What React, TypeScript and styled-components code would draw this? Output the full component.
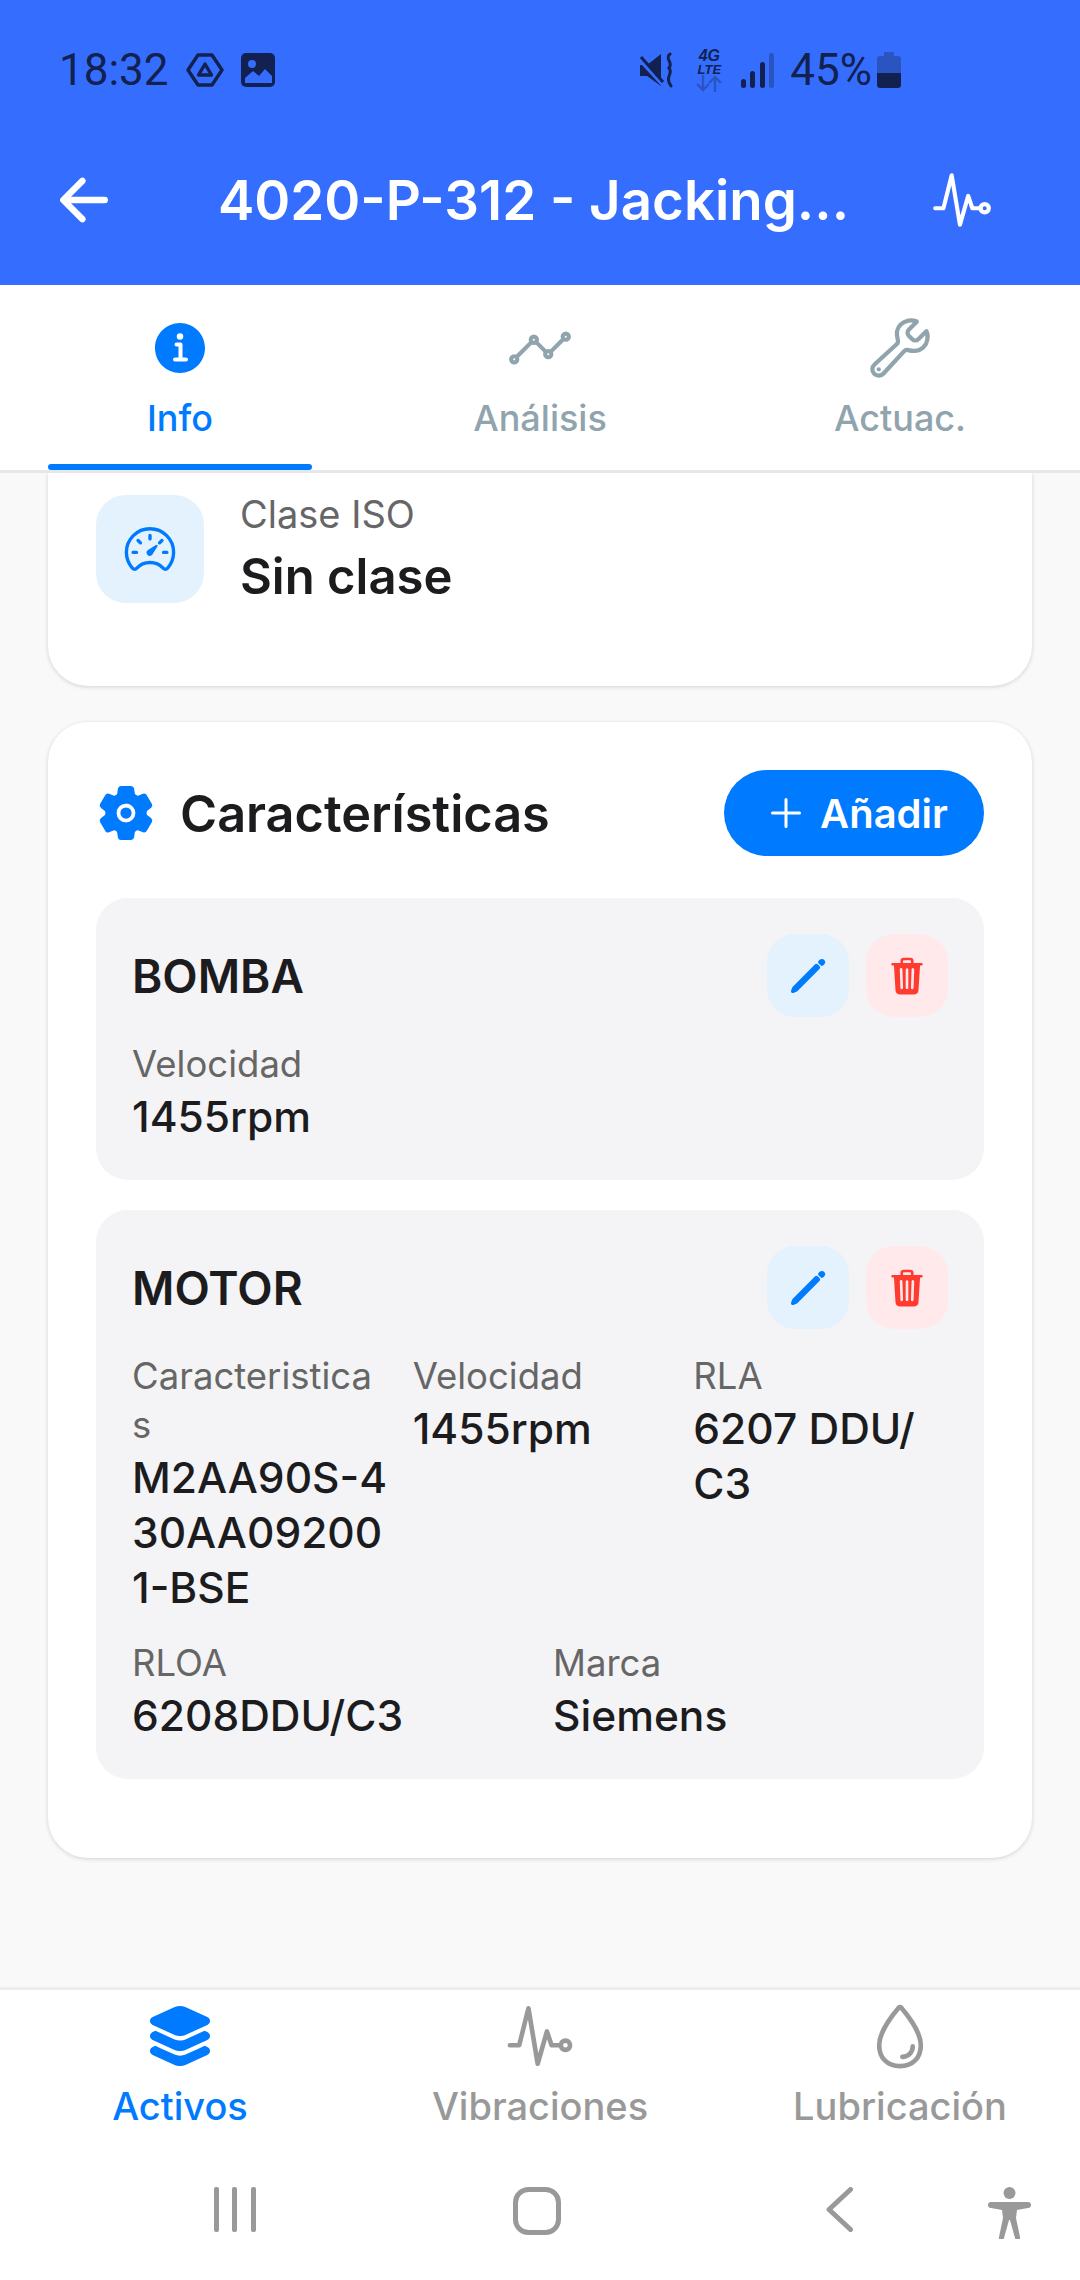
import React from "react";
import styled, { createGlobalStyle } from "styled-components";
import {
  IoAdd,
  IoAnalyticsOutline,
  IoArrowBack,
  IoBuildOutline,
  IoInformationCircle,
  IoLayers,
  IoPencil,
  IoPulseOutline,
  IoSettings,
  IoSpeedometerOutline,
  IoTrash,
  IoWaterOutline,
} from "react-icons/io5";

const ACCENT = "#007aff";
const STATUS_INK = "#12214f";
const STATUS_DIM = "#2a55c0";

const GlobalStyle = createGlobalStyle`
  html, body {
    margin: 0;
    padding: 0;
    background: #f9f9f9;
  }
  * {
    box-sizing: border-box;
  }
`;

const Screen = styled.div`
  width: 1080px;
  height: 2280px;
  display: flex;
  flex-direction: column;
  overflow: hidden;
  font-family: Inter, "Liberation Sans", sans-serif;
  color: #1c1c1e;
  background: #f9f9f9;
`;

const Header = styled.header`
  height: 285px;
  background: #356eff;
  display: flex;
  flex-direction: column;
  flex-shrink: 0;
`;

const StatusBar = styled.div`
  height: 140px;
  padding: 0 60px 0 59px;
  display: flex;
  align-items: center;
  justify-content: space-between;
  font-family: Roboto, sans-serif;
  font-size: 44px;
  color: ${STATUS_INK};
`;

const StatusGroup = styled.div<{ $gap: number }>`
  display: flex;
  align-items: center;
  gap: ${(p) => p.$gap}px;
`;

const StatusRight = styled(StatusGroup)`
  margin-right: 119px;
`;

const MuteSlot = styled.div`
  display: flex;
  margin-right: 4px;
`;

const Percent = styled.span`
  margin-left: -1px;
  margin-right: -12px;
`;

const NetBadge = styled.div`
  width: 30px;
  display: flex;
  flex-direction: column;
  align-items: center;
  font-family: "Liberation Sans", sans-serif;
  font-weight: 700;
  font-style: italic;
`;

const NetText = styled.span<{ $size: number }>`
  font-size: ${(p) => p.$size}px;
  line-height: ${(p) => p.$size}px;
  height: ${(p) => p.$size - 1}px;
`;

const AppBar = styled.div`
  height: 120px;
  padding: 0 85px 0 50px;
  display: flex;
  align-items: center;
  justify-content: space-between;
  color: #fff;
`;

const BarTitle = styled.h1`
  margin: 0;
  padding-left: 20px;
  flex: 1;
  text-align: center;
  font-size: 54.6px;
  font-weight: 600;
  white-space: nowrap;
`;

const TabBar = styled.nav`
  height: 188px;
  flex-shrink: 0;
  display: flex;
  background: #fff;
  border-bottom: 3px solid #e5e7ea;
`;

const Tab = styled.div<{ $active?: boolean }>`
  position: relative;
  flex: 1;
  display: flex;
  flex-direction: column;
  align-items: center;
  padding-top: 27px;
  color: ${(p) => (p.$active ? ACCENT : "#90a4ae")};
  ${(p) =>
    p.$active &&
    `&::after {
      content: "";
      position: absolute;
      left: 48px;
      right: 48px;
      bottom: 0;
      height: 6px;
      border-radius: 3px;
      background: ${ACCENT};
    }`}
`;

const TabIcon = styled.div`
  height: 72px;
  display: flex;
  align-items: center;
  justify-content: center;
`;

const TabLabel = styled.span`
  margin-top: 12px;
  font-size: 36px;
  line-height: 44px;
  font-weight: 500;
`;

const Content = styled.main`
  flex: 1;
  padding: 0 48px;
  display: flex;
  flex-direction: column;
  gap: 36px;
  overflow: hidden;
`;

const Card = styled.section`
  background: #fff;
  border-radius: 40px;
  box-shadow: 0 1px 4px rgba(0, 0, 0, 0.16);
`;

const IsoCard = styled(Card)`
  padding: 22px 48px 83px;
  border-top-left-radius: 0;
  border-top-right-radius: 0;
  display: flex;
  align-items: center;
  gap: 36px;
`;

const IconBox = styled.div`
  width: 108px;
  height: 108px;
  border-radius: 30px;
  background: #e3f2fd;
  color: ${ACCENT};
  display: flex;
  align-items: center;
  justify-content: center;
`;

const IsoLabel = styled.div`
  font-size: 38px;
  line-height: 38px;
  color: #666;
`;

const IsoValue = styled.div`
  margin-top: 18px;
  font-size: 49px;
  line-height: 52px;
  font-weight: 600;
`;

const FeatureCard = styled(Card)`
  padding: 48px 48px 79px;
`;

const FeatureHead = styled.div`
  display: flex;
  align-items: center;
  justify-content: space-between;
  margin-bottom: 42px;
`;

const FeatureTitle = styled.div`
  display: flex;
  align-items: center;
  gap: 24px;
  color: ${ACCENT};
`;

const TitleText = styled.h2`
  margin: 0;
  font-size: 50.4px;
  font-weight: 600;
  color: #1c1c1e;
`;

const AddButton = styled.button`
  width: 260px;
  height: 86px;
  padding: 0 0 0 2px;
  border: 0;
  border-radius: 43px;
  background: ${ACCENT};
  color: #fff;
  display: flex;
  align-items: center;
  justify-content: center;
  gap: 10px;
  font-family: inherit;
  font-size: 40px;
  font-weight: 600;
`;

const GroupList = styled.div`
  display: flex;
  flex-direction: column;
  gap: 30px;
`;

const Group = styled.article`
  padding: 36px;
  border-radius: 32px;
  background: #f4f4f6;
`;

const GroupHead = styled.div`
  display: flex;
  align-items: center;
  justify-content: space-between;
`;

const GroupName = styled.h3`
  margin: 0;
  font-size: 46px;
  font-weight: 600;
`;

const GroupActions = styled.div`
  display: flex;
  gap: 17px;
`;

const ActionButton = styled.button<{ $danger?: boolean }>`
  width: 82px;
  height: 83px;
  border: 0;
  padding: 0;
  border-radius: 28px;
  display: flex;
  align-items: center;
  justify-content: center;
  background: ${(p) => (p.$danger ? "#ffe9ea" : "#e3f2fd")};
  color: ${(p) => (p.$danger ? "#ff3b30" : ACCENT)};
`;

const FieldGrid = styled.div<{ $cols: number; $next?: boolean }>`
  margin-top: ${(p) => (p.$next ? 24 : 23)}px;
  display: grid;
  grid-template-columns: repeat(${(p) => p.$cols}, minmax(0, 1fr));
  column-gap: 26px;
`;

const FieldBlock = styled.div``;

const FieldLabel = styled.div`
  font-size: 36.5px;
  line-height: 49px;
  color: #666;
  white-space: nowrap;
`;

const FieldValue = styled.div`
  font-size: 42.5px;
  line-height: 55px;
  font-weight: 500;
  white-space: nowrap;
`;

const BottomNav = styled.nav`
  flex-shrink: 0;
  height: 163px;
  padding-top: 9px;
  display: flex;
  background: #fff;
  border-top: 3px solid #eeeeee;
`;

const NavItem = styled.div<{ $active?: boolean }>`
  flex: 1;
  display: flex;
  flex-direction: column;
  align-items: center;
  color: ${(p) => (p.$active ? ACCENT : "#999")};
`;

const NavLabel = styled.span`
  margin-top: 11px;
  font-size: 38px;
  line-height: 44px;
  font-weight: 500;
`;

const SystemNav = styled.div`
  flex-shrink: 0;
  height: 130px;
  background: #fff;
  display: flex;
  align-items: flex-start;
  padding-top: 37px;
  color: #999;
`;

const SystemButton = styled.div<{ $left: number }>`
  margin-left: ${(p) => p.$left}px;
  display: flex;
`;

const DriveIcon = () => (
  <svg width="38" height="34" viewBox="0 0 38 34" fill="none" stroke={STATUS_INK} strokeWidth="3.4" strokeLinejoin="round">
    <path d="M12 2h14l10 15-10 15H12L2 17z" />
    <path d="M19 11l6.5 11h-13z" />
  </svg>
);

const PictureIcon = () => (
  <svg width="34" height="34" viewBox="0 0 34 34">
    <rect width="34" height="34" rx="5" fill={STATUS_INK} />
    <circle cx="11" cy="11" r="4" fill="#356eff" />
    <path d="M4 30v-5l8-7 6 5 6-7 7 7v7z" fill="#356eff" />
  </svg>
);

const MuteIcon = () => (
  <svg width="34" height="36" viewBox="0 0 34 36" fill="none">
    <path d="M1 13h7l14-11v32L8 24H1z" fill={STATUS_INK} />
    <path d="M0 6l24 26" stroke="#356eff" strokeWidth="5" />
    <path d="M2 5l22 25" stroke={STATUS_INK} strokeWidth="3" />
    <path d="M31 2c-6 5 4 8-1 14 5 6-5 8 2 18" stroke={STATUS_INK} strokeWidth="3" strokeLinecap="round" />
  </svg>
);

const ArrowsIcon = () => (
  <svg width="28" height="17" viewBox="0 0 28 17" fill="none" strokeWidth="2.4">
    <path d="M8 0v15M2 9l6 6 6-6" stroke={STATUS_DIM} />
    <path d="M20 17V2M14 8l6-6 6 6" stroke={STATUS_DIM} />
  </svg>
);

const SignalIcon = () => (
  <svg width="33" height="35" viewBox="0 0 33 35">
    <rect x="0" y="26" width="5" height="9" rx="2.5" fill={STATUS_INK} />
    <rect x="9" y="18" width="5" height="17" rx="2.5" fill={STATUS_INK} />
    <rect x="19" y="9" width="5" height="26" rx="2.5" fill={STATUS_INK} />
    <rect x="28" y="0" width="5" height="35" rx="2.5" fill={STATUS_DIM} />
  </svg>
);

const BatteryIcon = () => (
  <svg width="24" height="36" viewBox="0 0 24 36">
    <path d="M7 0h10v4H7z" fill={STATUS_DIM} />
    <path d="M3 4h18a3 3 0 0 1 3 3v14H0V7a3 3 0 0 1 3-3z" fill={STATUS_DIM} />
    <path d="M0 21h24v12a3 3 0 0 1-3 3H3a3 3 0 0 1-3-3z" fill={STATUS_INK} />
  </svg>
);

const BarsIcon = () => (
  <svg width="42" height="45" viewBox="0 0 42 45" fill="currentColor">
    <rect x="0" width="5" height="45" rx="2" />
    <rect x="18" width="5" height="45" rx="2" />
    <rect x="37" width="5" height="45" rx="2" />
  </svg>
);

const HomeIcon = () => (
  <svg width="48" height="48" viewBox="0 0 48 48" fill="none" stroke="currentColor" strokeWidth="5">
    <rect x="2.5" y="2.5" width="43" height="43" rx="13" />
  </svg>
);

const BackIcon = () => (
  <svg width="27" height="45" viewBox="0 0 27 45" fill="none" stroke="currentColor" strokeWidth="5" strokeLinecap="round" strokeLinejoin="round">
    <path d="M24.5 2.5L3 22.5l21.5 20" />
  </svg>
);

const PersonIcon = () => (
  <svg width="43" height="52" viewBox="0 0 43 52" fill="currentColor">
    <circle cx="21.5" cy="6" r="6" />
    <path d="M3 15h37a3 3 0 0 1 0 6l-11 2 -1 8 4 19a2.5 2.5 0 0 1-5 1l-5-18h-1l-5 18a2.5 2.5 0 0 1-5-1l4-19-1-8-11-2a3 3 0 0 1 0-6z" />
  </svg>
);

const Field: React.FC<{ label: React.ReactNode; value: React.ReactNode }> = ({ label, value }) => (
  <FieldBlock>
    <FieldLabel>{label}</FieldLabel>
    <FieldValue>{value}</FieldValue>
  </FieldBlock>
);

const Actions = () => (
  <GroupActions>
    <ActionButton>
      <IoPencil size={42} />
    </ActionButton>
    <ActionButton $danger>
      <IoTrash size={42} />
    </ActionButton>
  </GroupActions>
);

export default function App() {
  return (
    <Screen>
      <GlobalStyle />
      <Header>
        <StatusBar>
          <StatusGroup $gap={17}>
            <span>18:32</span>
            <DriveIcon />
            <PictureIcon />
          </StatusGroup>
          <StatusRight $gap={17}>
            <MuteSlot>
              <MuteIcon />
            </MuteSlot>
            <NetBadge>
              <NetText $size={16}>4G</NetText>
              <NetText $size={13}>LTE</NetText>
              <ArrowsIcon />
            </NetBadge>
            <SignalIcon />
            <Percent>45%</Percent>
            <BatteryIcon />
          </StatusRight>
        </StatusBar>
        <AppBar>
          <IoArrowBack size={68} />
          <BarTitle>4020-P-312 - Jacking...</BarTitle>
          <IoPulseOutline size={66} />
        </AppBar>
      </Header>

      <TabBar>
        <Tab $active>
          <TabIcon>
            <IoInformationCircle size={64} />
          </TabIcon>
          <TabLabel>Info</TabLabel>
        </Tab>
        <Tab>
          <TabIcon>
            <IoAnalyticsOutline size={66} />
          </TabIcon>
          <TabLabel>Análisis</TabLabel>
        </Tab>
        <Tab>
          <TabIcon>
            <IoBuildOutline size={68} />
          </TabIcon>
          <TabLabel>Actuac.</TabLabel>
        </Tab>
      </TabBar>

      <Content>
        <IsoCard>
          <IconBox>
            <IoSpeedometerOutline size={54} />
          </IconBox>
          <div>
            <IsoLabel>Clase ISO</IsoLabel>
            <IsoValue>Sin clase</IsoValue>
          </div>
        </IsoCard>

        <FeatureCard>
          <FeatureHead>
            <FeatureTitle>
              <IoSettings size={60} />
              <TitleText>Características</TitleText>
            </FeatureTitle>
            <AddButton>
              <IoAdd size={48} />
              Añadir
            </AddButton>
          </FeatureHead>
          <GroupList>
            <Group>
              <GroupHead>
                <GroupName>BOMBA</GroupName>
                <Actions />
              </GroupHead>
              <FieldGrid $cols={1}>
                <Field label="Velocidad" value="1455rpm" />
              </FieldGrid>
            </Group>
            <Group>
              <GroupHead>
                <GroupName>MOTOR</GroupName>
                <Actions />
              </GroupHead>
              <FieldGrid $cols={3}>
                <Field
                  label={
                    <>
                      Caracteristica
                      <br />s
                    </>
                  }
                  value={
                    <>
                      M2AA90S-4
                      <br />
                      30AA09200
                      <br />
                      1-BSE
                    </>
                  }
                />
                <Field label="Velocidad" value="1455rpm" />
                <Field
                  label="RLA"
                  value={
                    <>
                      6207 DDU/
                      <br />
                      C3
                    </>
                  }
                />
              </FieldGrid>
              <FieldGrid $cols={2} $next>
                <Field label="RLOA" value="6208DDU/C3" />
                <Field label="Marca" value="Siemens" />
              </FieldGrid>
            </Group>
          </GroupList>
        </FeatureCard>
      </Content>

      <BottomNav>
        <NavItem $active>
          <IoLayers size={74} />
          <NavLabel>Activos</NavLabel>
        </NavItem>
        <NavItem>
          <IoPulseOutline size={74} />
          <NavLabel>Vibraciones</NavLabel>
        </NavItem>
        <NavItem>
          <IoWaterOutline size={74} />
          <NavLabel>Lubricación</NavLabel>
        </NavItem>
      </BottomNav>
      <SystemNav>
        <SystemButton $left={214}>
          <BarsIcon />
        </SystemButton>
        <SystemButton $left={257}>
          <HomeIcon />
        </SystemButton>
        <SystemButton $left={265}>
          <BackIcon />
        </SystemButton>
        <SystemButton $left={135}>
          <PersonIcon />
        </SystemButton>
      </SystemNav>
    </Screen>
  );
}
